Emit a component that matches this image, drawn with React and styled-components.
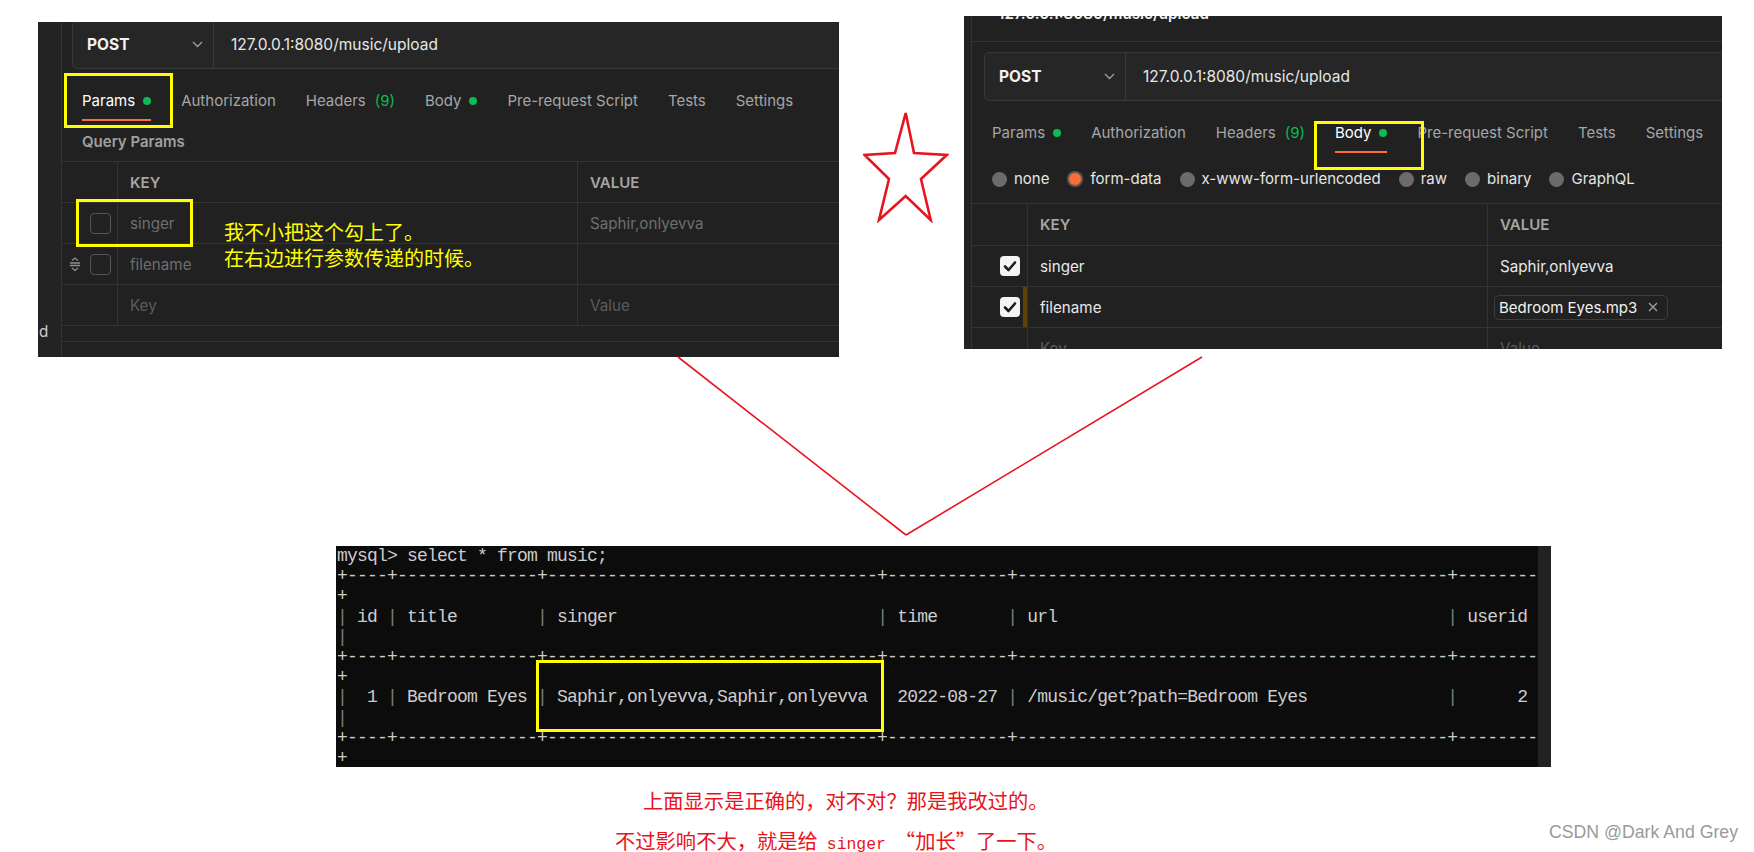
import React from 'react';
import styled, { createGlobalStyle } from 'styled-components';

const GlobalStyle = createGlobalStyle`
  *, *::before, *::after { box-sizing: border-box; }
  html, body { margin: 0; padding: 0; background: #ffffff; }
  body { width: 1754px; height: 852px; overflow: hidden; }
`;

const Page = styled.div`
  position: relative;
  width: 1754px;
  height: 852px;
  overflow: hidden;
  background: #ffffff;
  font-family: Inter, 'Noto Sans', sans-serif;
`;

const TopRow = styled.div`
  display: flex;
  align-items: flex-start;
  height: 357px;
  padding-left: 38px;
`;

const Shot = styled.div`
  position: relative;
  display: flex;
  flex: none;
  width: ${(p) => p.$w}px;
  height: ${(p) => p.$h}px;
  margin-top: ${(p) => p.$top}px;
  background: #212121;
  overflow: hidden;
  color: #a6a6a6;
  font-size: 15.2px;
`;

const Sidebar = styled.div`
  flex: none;
  width: ${(p) => p.$w}px;
  display: flex;
  flex-direction: column;
  justify-content: flex-end;
  padding: 0 0 15px 1px;
  border-right: 1px solid #333333;
  background: #232323;
  color: #cfcfcf;
  line-height: 20px;
`;

const Main = styled.div`
  flex: 1;
  min-width: 0;
  display: flex;
  flex-direction: column;
`;

const TopStrip = styled.div`
  flex: none;
  height: 26px;
  overflow: hidden;
  padding-left: 26px;
  border-bottom: 1px solid #333333;
  color: #f0f0f0;
  font-weight: 600;
  line-height: 20px;
  span { display: block; margin-top: -12px; }
`;

const RequestBar = styled.div`
  flex: none;
  display: flex;
  height: 49px;
  margin: ${(p) => p.$top}px -30px 0 ${(p) => p.$left}px;
  border: 1px solid #383838;
  border-radius: 5px;
  background: #262626;
  font-size: 15.5px;
`;

const MethodBox = styled.div`
  flex: none;
  width: 141px;
  display: flex;
  align-items: center;
  justify-content: space-between;
  padding: 0 10px 0 14px;
  border-right: 1px solid #383838;
  color: #f2f2f2;
  font-weight: 700;
`;

const UrlText = styled.div`
  display: flex;
  align-items: center;
  padding-left: 17px;
  color: #e6e6e6;
`;

const TabBar = styled.div`
  flex: none;
  display: flex;
  gap: 30px;
  margin-top: 22px;
  padding-left: 20px;
  font-size: 15px;
`;

const Tab = styled.div`
  display: flex;
  align-items: center;
  line-height: 19px;
  padding-bottom: 9px;
  border-bottom: 2px solid ${(p) => (p.$active ? '#ff6c37' : 'transparent')};
  color: ${(p) => (p.$active ? '#ffffff' : '#a6a6a6')};
  white-space: nowrap;
`;

const Dot = styled.span`
  width: 8px;
  height: 8px;
  margin-left: 8px;
  border-radius: 50%;
  background: #0cbb52;
`;

const Green = styled.span`
  color: #0cbb52;
  margin-left: 9px;
`;

const SectionLabel = styled.div`
  flex: none;
  margin: 11px 0 9px 20px;
  line-height: 20px;
  font-size: 15px;
  font-weight: 600;
  color: #a0a0a0;
`;

const RadioRow = styled.div`
  flex: none;
  display: flex;
  gap: 18px;
  margin: 16px 0 14px 20px;
  line-height: 20px;
  font-size: 15px;
`;

const RadioOpt = styled.div`
  display: flex;
  align-items: center;
  gap: 7px;
  color: #e6e6e6;
`;

const RadioDot = styled.span`
  flex: none;
  width: ${(p) => (p.$on ? 12 : 15)}px;
  height: ${(p) => (p.$on ? 12 : 15)}px;
  margin: 0 ${(p) => (p.$on ? 2 : 0)}px;
  border-radius: 50%;
  background: ${(p) => (p.$on ? '#ff6c37' : '#6b6b6b')};
  box-shadow: ${(p) => (p.$on ? '0 0 0 2px #5a5a5a' : 'none')};
`;

const Table = styled.div`
  flex: none;
  border-top: 1px solid #333333;
`;

const Row = styled.div`
  display: grid;
  grid-template-columns: 56px 460px 1fr;
  height: ${(p) => p.$h || 41}px;
  border-bottom: 1px solid #333333;
`;

const Cell = styled.div`
  display: flex;
  align-items: center;
  gap: 8px;
  padding-left: ${(p) => (p.$pad ?? 12)}px;
  border-right: ${(p) => (p.$last ? 'none' : '1px solid #333333')};
  color: ${(p) => p.$color || '#e8e8e8'};
  font-weight: ${(p) => (p.$bold ? 600 : 400)};
  font-size: ${(p) => (p.$bold ? 15 : 15.2)}px;
  white-space: nowrap;
  box-shadow: ${(p) => (p.$marker ? 'inset -4px 0 0 #5e4204' : 'none')};
`;

const HandleSlot = styled.span`
  flex: none;
  width: 14px;
  height: 16px;
  display: flex;
`;

const Box = styled.span`
  flex: none;
  display: flex;
  align-items: center;
  justify-content: center;
  width: ${(p) => p.$size}px;
  height: ${(p) => p.$size}px;
  border-radius: 4px;
  border: ${(p) => (p.$checked ? 'none' : '1.5px solid #555555')};
  background: ${(p) => (p.$checked ? '#f4f4f4' : 'transparent')};
`;

const FileChip = styled.span`
  display: flex;
  align-items: center;
  gap: 11px;
  height: 25px;
  padding: 0 9px 0 4px;
  border: 1px solid #3c3c3c;
  border-radius: 5px;
  color: #f2f2f2;
  font-size: 15px;
`;

const Spacer = styled.div`
  flex: none;
  height: 16px;
  border-bottom: 1px solid #333333;
`;

const Highlight = styled.div`
  position: absolute;
  left: ${(p) => p.$x}px;
  top: ${(p) => p.$y}px;
  width: ${(p) => p.$w}px;
  height: ${(p) => p.$h}px;
  border: 3px solid #ffff00;
  pointer-events: none;
`;

const Note = styled.div`
  position: absolute;
  left: 186px;
  top: 197px;
  color: #ffff00;
  font-family: 'Noto Sans CJK SC', sans-serif;
  font-size: 20px;
  line-height: 25.5px;
  white-space: nowrap;
`;

const StarSlot = styled.div`
  flex: none;
  width: 125px;
  padding: 111px 0 0 24px;
`;

const Terminal = styled.div`
  position: relative;
  display: flex;
  width: 1215px;
  height: 221px;
  margin: 189px 0 0 336px;
  background: #0c0c0c;
  overflow: hidden;
`;

const Screen = styled.div`
  flex: 1;
  padding-left: 1px;
  font-family: 'Liberation Mono', monospace;
  font-size: 18px;
  letter-spacing: -0.8px;
  line-height: 20.2px;
  color: #cccccc;
  white-space: pre;
`;

const Pipe = styled.span`
  color: #7c7c7c;
`;

const ScrollTrack = styled.div`
  flex: none;
  width: 13px;
  background: #222222;
`;

const Caption = styled.div`
  margin-top: 13px;
  color: #e8141b;
  font-family: 'Noto Sans CJK SC', sans-serif;
  font-size: 20.3px;
`;

const CaptionLine = styled.div`
  line-height: 40px;
  padding-left: ${(p) => p.$indent}px;
  white-space: nowrap;
  code {
    margin: 0 9px;
    font-family: 'Liberation Mono', monospace;
    font-size: 16.4px;
  }
`;

const Watermark = styled.div`
  position: absolute;
  right: 16px;
  top: 821px;
  font-family: 'Liberation Sans', Arial, sans-serif;
  font-size: 17.7px;
  line-height: 22px;
  color: #9a9a9a;
`;

const Overlay = styled.svg`
  position: absolute;
  left: 0;
  top: 0;
  pointer-events: none;
`;

const Chevron = () => (
  <svg width="11" height="7" viewBox="0 0 11 7">
    <path d="M1 1 L5.5 5.5 L10 1" fill="none" stroke="#a0a0a0" strokeWidth="1.3" />
  </svg>
);

const Handle = () => (
  <svg width="14" height="16" viewBox="0 0 14 16">
    <g fill="none" stroke="#8c8c8c" strokeWidth="1.3">
      <path d="M4 4.5 L7 2 L10 4.5" />
      <path d="M2 7 H12 M2 9.5 H12" />
      <path d="M4 12 L7 14.5 L10 12" />
    </g>
  </svg>
);

const Check = ({ checked, size }) => (
  <Box $checked={checked} $size={size}>
    {checked && (
      <svg width="14" height="12" viewBox="0 0 14 12">
        <path d="M2 6.5 L5.5 10 L12 2.5" fill="none" stroke="#1c1c1c" strokeWidth="2.6" strokeLinecap="round" strokeLinejoin="round" />
      </svg>
    )}
  </Box>
);

const Tabs = ({ active }) => (
  <TabBar>
    <Tab $active={active === 'params'}>Params<Dot /></Tab>
    <Tab>Authorization</Tab>
    <Tab>Headers<Green>(9)</Green></Tab>
    <Tab $active={active === 'body'}>Body<Dot /></Tab>
    <Tab>Pre-request Script</Tab>
    <Tab>Tests</Tab>
    <Tab>Settings</Tab>
  </TabBar>
);

const Request = ({ top, left }) => (
  <RequestBar $top={top} $left={left}>
    <MethodBox>POST<Chevron /></MethodBox>
    <UrlText>127.0.0.1:8080/music/upload</UrlText>
  </RequestBar>
);

const ParamsShot = () => (
  <Shot $w={801} $h={335} $top={22}>
    <Sidebar $w={24}>d</Sidebar>
    <Main>
      <Request top={-2} left={10} />
      <Tabs active="params" />
      <SectionLabel>Query Params</SectionLabel>
      <Table>
        <Row>
          <Cell />
          <Cell $bold $color="#a6a6a6">KEY</Cell>
          <Cell $bold $last $color="#a6a6a6">VALUE</Cell>
        </Row>
        <Row>
          <Cell $pad={6}><HandleSlot /><Check size={21} /></Cell>
          <Cell $color="#6e6e6e">singer</Cell>
          <Cell $last $color="#6e6e6e">Saphir,onlyevva</Cell>
        </Row>
        <Row>
          <Cell $pad={6}><HandleSlot><Handle /></HandleSlot><Check size={21} /></Cell>
          <Cell $color="#6e6e6e">filename</Cell>
          <Cell $last />
        </Row>
        <Row>
          <Cell />
          <Cell $color="#5c5c5c">Key</Cell>
          <Cell $last $color="#5c5c5c">Value</Cell>
        </Row>
      </Table>
      <Spacer />
    </Main>
    <Highlight $x={26} $y={51} $w={109} $h={55} />
    <Highlight $x={38} $y={177} $w={117} $h={48} />
    <Note>
      我不小把这个勾上了。
      <br />
      在右边进行参数传递的时候。
    </Note>
  </Shot>
);

const BodyShot = () => (
  <Shot $w={758} $h={333} $top={16}>
    <Sidebar $w={8} />
    <Main>
      <TopStrip><span>127.0.0.1:8080/music/upload</span></TopStrip>
      <Request top={10} left={12} />
      <Tabs active="body" />
      <RadioRow>
        <RadioOpt><RadioDot />none</RadioOpt>
        <RadioOpt><RadioDot $on />form-data</RadioOpt>
        <RadioOpt><RadioDot />x-www-form-urlencoded</RadioOpt>
        <RadioOpt><RadioDot />raw</RadioOpt>
        <RadioOpt><RadioDot />binary</RadioOpt>
        <RadioOpt><RadioDot />GraphQL</RadioOpt>
      </RadioRow>
      <Table>
        <Row $h={42}>
          <Cell />
          <Cell $bold $color="#a6a6a6">KEY</Cell>
          <Cell $bold $last $color="#a6a6a6">VALUE</Cell>
        </Row>
        <Row>
          <Cell $pad={6}><HandleSlot /><Check checked size={20} /></Cell>
          <Cell>singer</Cell>
          <Cell $last>Saphir,onlyevva</Cell>
        </Row>
        <Row>
          <Cell $pad={6} $marker><HandleSlot /><Check checked size={20} /></Cell>
          <Cell>filename</Cell>
          <Cell $last $pad={6}>
            <FileChip>
              Bedroom Eyes.mp3
              <svg width="10" height="10" viewBox="0 0 10 10">
                <path d="M1 1 L9 9 M9 1 L1 9" stroke="#a0a0a0" strokeWidth="1.3" />
              </svg>
            </FileChip>
          </Cell>
        </Row>
        <Row>
          <Cell />
          <Cell $color="#5c5c5c">Key</Cell>
          <Cell $last $color="#5c5c5c">Value</Cell>
        </Row>
      </Table>
    </Main>
    <Highlight $x={350} $y={105} $w={110} $h={49} />
  </Shot>
);

const widths = [4, 14, 33, 12, 43, 8];
const dashLine = '+' + widths.map((w) => '-'.repeat(w)).join('+');
const cellRow = (cells) => '|' + cells.join('|');

const header = cellRow([
  ' id ',
  ' ' + 'title'.padEnd(12) + ' ',
  ' ' + 'singer'.padEnd(31) + ' ',
  ' ' + 'time'.padEnd(10) + ' ',
  ' ' + 'url'.padEnd(41) + ' ',
  ' userid ',
]);

const data = cellRow([
  '  1 ',
  ' Bedroom Eyes ',
  ' Saphir,onlyevva,Saphir,onlyevva ',
  ' 2022-08-27 ',
  ' ' + '/music/get?path=Bedroom Eyes'.padEnd(41) + ' ',
  '      2 ',
]);

const termLines = [
  'mysql> select * from music;',
  dashLine,
  '+',
  header,
  '|',
  dashLine,
  '+',
  data,
  '|',
  dashLine,
  '+',
  '1 row in set (0.01 sec)',
];

const TermLine = ({ text }) => {
  const parts = text.split('|');
  return (
    <div>
      {parts.map((part, i) => (
        <React.Fragment key={i}>
          {i > 0 && <Pipe>|</Pipe>}
          {part}
        </React.Fragment>
      ))}
    </div>
  );
};

export default function App() {
  return (
    <Page>
      <GlobalStyle />
      <TopRow>
        <ParamsShot />
        <StarSlot>
          <svg width="86" height="112" viewBox="0 0 86 112">
            <polygon
              points="42.7,2 51,42 83.7,44 58,68 67.7,109 42.7,85 16,109 26,68 1.5,44 32,42"
              fill="none"
              stroke="#e8141e"
              strokeWidth="2.6"
              strokeLinejoin="miter"
            />
          </svg>
        </StarSlot>
        <BodyShot />
      </TopRow>

      <Terminal>
        <Screen>
          {termLines.map((line, i) => (
            <TermLine key={i} text={line} />
          ))}
        </Screen>
        <ScrollTrack />
        <Highlight $x={200} $y={114} $w={348} $h={72} />
      </Terminal>

      <Caption>
        <CaptionLine $indent={643}>上面显示是正确的，对不对？那是我改过的。</CaptionLine>
        <CaptionLine $indent={615}>
          不过影响不大，就是给<code>singer</code>“加长”了一下。
        </CaptionLine>
      </Caption>

      <Watermark>CSDN @Dark And Grey</Watermark>

      <Overlay width="1754" height="852" viewBox="0 0 1754 852">
        <g stroke="#e8141e" strokeWidth="1.6" fill="none">
          <path d="M678 357 L906 535" />
          <path d="M1202 357 L906 535" />
        </g>
      </Overlay>
    </Page>
  );
}
